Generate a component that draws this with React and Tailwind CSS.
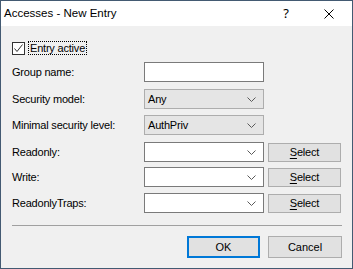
const body = { fontFamily: '"Liberation Sans", Arial, sans-serif' };

function Chevron() {
  return (
    <svg width="9" height="5" viewBox="0 0 9 5" className="shrink-0">
      <path d="M0.5 0.5 L4.5 4.5 L8.5 0.5" fill="none" stroke="#5a5a5a" strokeWidth="1" />
    </svg>
  );
}

function Label({ children }) {
  return <div className="w-[132px] text-[11px] tracking-[-0.2px] text-black">{children}</div>;
}

function TextBox() {
  return <div className="w-[120px] h-[20px] bg-white border border-[#7a7a7a]" />;
}

function ListCombo({ value }) {
  return (
    <div className="w-[120px] h-[20px] bg-[#e5e5e5] border border-[#adadad] flex items-center justify-between pl-[3px] pr-[7px]">
      <span className="text-[11px] tracking-[-0.2px] text-black">{value}</span>
      <Chevron />
    </div>
  );
}

function EditCombo() {
  return (
    <div className="w-[120px] h-[20px] bg-white border border-[#7a7a7a] flex items-center justify-end pr-[7px]">
      <Chevron />
    </div>
  );
}

function SelectButton() {
  return (
    <div className="ml-[4px] w-[73px] h-[19px] bg-[#e1e1e1] border border-[#adadad] flex items-center justify-center text-[11px] tracking-[-0.2px] text-black">
      <span>
        <span className="underline underline-offset-2">S</span>elect
      </span>
    </div>
  );
}

function Row({ label, className, children }) {
  return (
    <div className={"flex items-center h-[20px] " + className}>
      <Label>{label}</Label>
      {children}
    </div>
  );
}

export default function App() {
  return (
    <div className="w-[353px] h-[269px] border border-[#435a72] bg-[#f0f0f0] flex flex-col overflow-hidden" style={body}>
      <div className="h-[25px] bg-white flex items-center shrink-0">
        <span className="pl-[3px] text-[11.5px] text-black">
          Accesses - New Entry
        </span>
        <span className="ml-auto mr-[35px] text-[13px] text-black" style={{ fontFamily: '"Noto Sans", sans-serif' }}>?</span>
        <svg width="10" height="10" viewBox="0 0 10 10" className="mr-[18px]">
          <path d="M0.5 0.5 L9.5 9.5 M9.5 0.5 L0.5 9.5" stroke="#000" strokeWidth="1" />
        </svg>
      </div>

      <div className="flex flex-col pl-[11px]">
        <div className="flex items-center mt-[15px] h-[14px]">
          <div className="w-[13px] h-[13px] bg-white border border-[#333] flex items-center justify-center">
            <svg width="11" height="11" viewBox="0 0 11 11">
              <path d="M1.5 5.5 L4 8.5 L9.5 1.5" fill="none" stroke="#333" strokeWidth="1" />
            </svg>
          </div>
          <span className="ml-[3px] px-[1px] border border-dotted border-black text-[11px] tracking-[-0.2px] leading-[12px] text-black">
            Entry active
          </span>
        </div>

        <Row label="Group name:" className="mt-[7px]">
          <TextBox />
        </Row>
        <Row label="Security model:" className="mt-[7px]">
          <ListCombo value="Any" />
        </Row>
        <Row label="Minimal security level:" className="mt-[6px]">
          <ListCombo value="AuthPriv" />
        </Row>
        <Row label="Readonly:" className="mt-[7px]">
          <EditCombo />
          <SelectButton />
        </Row>
        <Row label="Write:" className="mt-[5px]">
          <EditCombo />
          <SelectButton />
        </Row>
        <Row label="ReadonlyTraps:" className="mt-[6px]">
          <EditCombo />
          <SelectButton />
        </Row>

        <div className="mt-[12px] w-[330px] h-[2px] border-t border-[#a0a0a0] border-b-white" />

        <div className="flex mt-[9px] ml-[175px]">
          <div className="w-[73px] h-[22px] bg-[#e1e1e1] border-2 border-[#0078d7] flex items-center justify-center text-[11px] text-black">
            OK
          </div>
          <div className="ml-[8px] w-[74px] h-[22px] bg-[#e1e1e1] border border-[#adadad] flex items-center justify-center text-[11px] text-black">
            Cancel
          </div>
        </div>
      </div>
    </div>
  );
}
